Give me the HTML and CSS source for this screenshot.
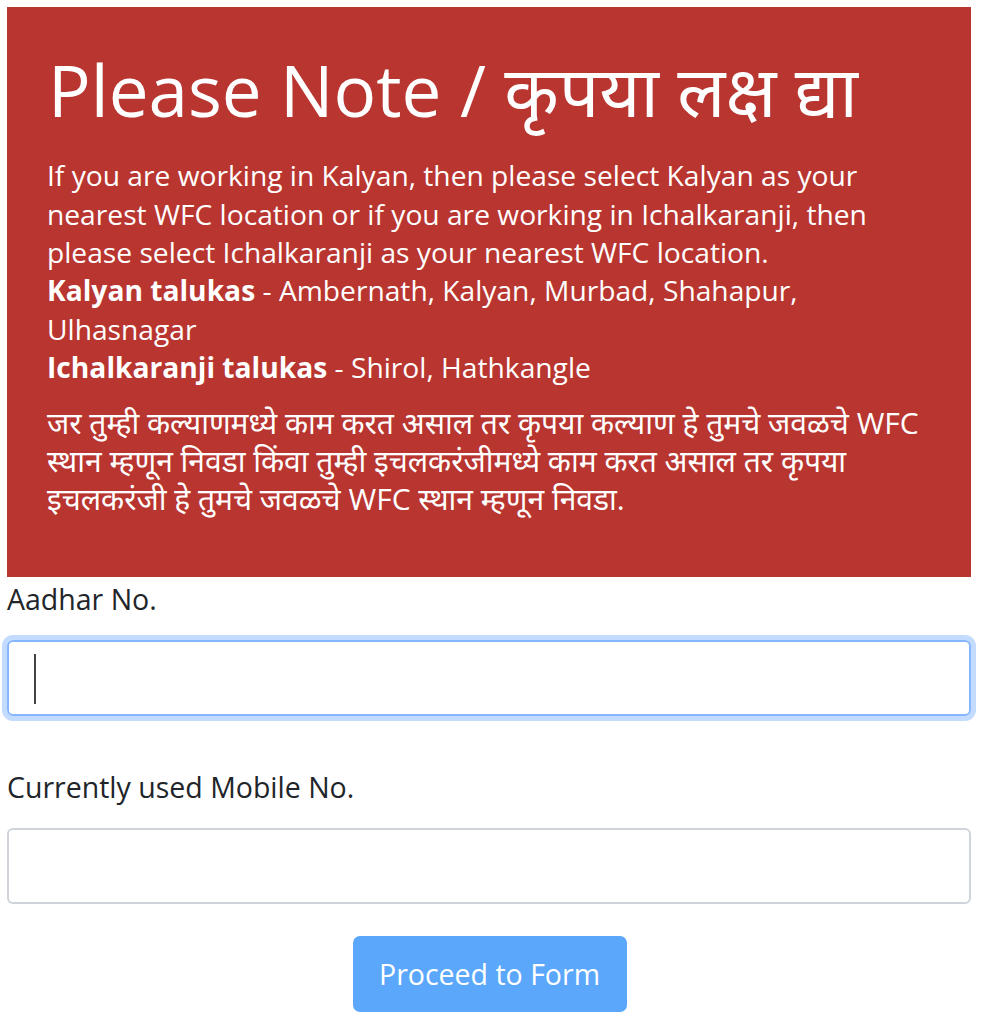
FILE: index.html
```html
<!DOCTYPE html>
<html>
<head>
<meta charset="utf-8">
<link rel="stylesheet" href="styles.css">
</head>
<body>
<div class="page">
  <div class="notice">
    <h1 class="notice-title">Please Note / कृपया लक्ष द्या</h1>
    <p class="notice-en">If you are working in Kalyan, then please select Kalyan as your nearest WFC location or if you are working in Ichalkaranji, then please select Ichalkaranji as your nearest WFC location.</p>
    <p class="notice-talukas"><b>Kalyan talukas</b> - Ambernath, Kalyan, Murbad, Shahapur, Ulhasnagar<br><b>Ichalkaranji talukas</b> - Shirol, Hathkangle</p>
    <p class="notice-mr">जर तुम्ही कल्याणमध्ये काम करत असाल तर कृपया कल्याण हे तुमचे जवळचे WFC स्थान म्हणून निवडा किंवा तुम्ही इचलकरंजीमध्ये काम करत असाल तर कृपया इचलकरंजी हे तुमचे जवळचे WFC स्थान म्हणून निवडा.</p>
  </div>
  <form class="form">
    <label class="field-label" for="aadhar">Aadhar No.</label>
    <div class="input focused" id="aadhar"><span class="caret"></span></div>
    <label class="field-label second" for="mobile">Currently used Mobile No.</label>
    <div class="input" id="mobile"></div>
    <div class="actions">
      <button type="button" class="btn">Proceed to Form</button>
    </div>
  </form>
</div>
</body>
</html>
```
FILE: styles.css
```css
* { box-sizing: border-box; }
html, body { margin: 0; padding: 0; background: #fff; }
body { font-family: "Open Sans", "Noto Sans", sans-serif; color: #212529; }
.page { width: 964px; margin-left: 7px; padding-top: 7px; }
.notice { background: #b93530; color: #fff; padding: 40px 40px 48px 40px; height: 570px; }
.notice-title { margin: 0 0 24px 1px; font-size: 71px; font-weight: 400; line-height: 1.2; white-space: nowrap; }
.notice-en { margin: 0; font-size: 28.2px; line-height: 38.4px; }
.notice-talukas { margin: 0; font-size: 28.2px; line-height: 38.4px; }
.notice-mr { margin: 17px 0 0; font-size: 30px; line-height: 38.4px; }
.field-label { display: block; font-size: 28.5px; line-height: 1.2; margin: 5px 0 0; }
.input { height: 76px; border: 2px solid #ced4da; border-radius: 6px; margin-top: 24px; position: relative; }
.input.focused { border-color: #86b7fe; box-shadow: 0 0 0 5px #c2dbfe; }
.caret { position: absolute; left: 25px; top: 12px; width: 2px; height: 50px; background: #444; }
.field-label.second { margin-top: 54px; }
.actions { display: flex; justify-content: center; margin-top: 32px; }
.btn { background: #5aa7fb; color: #fff; border: 0; border-radius: 7px; height: 76px; width: 274px; font-family: inherit; font-size: 28.5px; margin-left: 1px; }
```
